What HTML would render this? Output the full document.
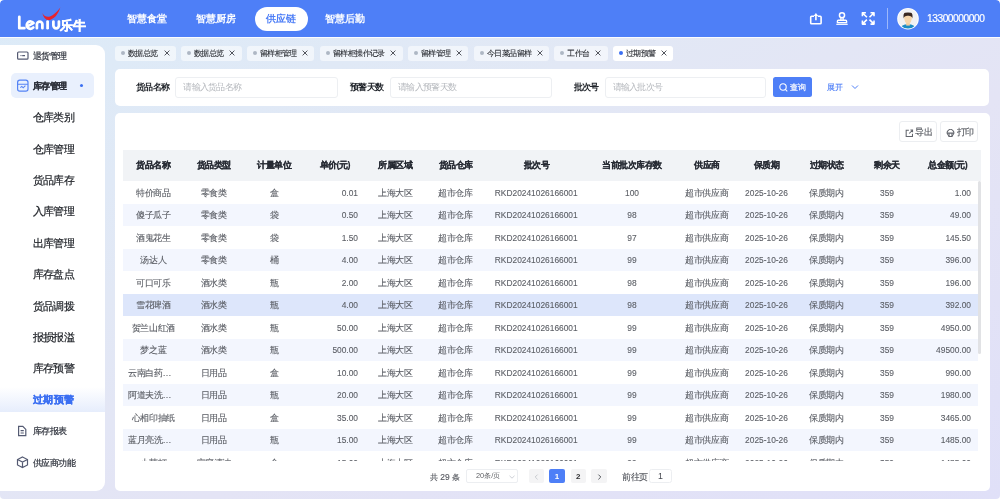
<!DOCTYPE html>
<html><head><meta charset="utf-8">
<style>
*{box-sizing:border-box;margin:0;padding:0}
html,body{width:1000px;height:499px;overflow:hidden}
body{font-family:"Liberation Sans",sans-serif;position:relative;color:#303133;background:#fff}
#root{position:absolute;left:0;top:0;width:1000px;height:499px;will-change:transform;border-radius:4px;overflow:hidden;background:linear-gradient(153deg,#dcebf8 0%,#e2e8f5 35%,#e4e4f5 60%,#e0e0f8 100%)}
.abs{position:absolute}
#hdr{left:0;top:0;width:1000px;height:37px;background:#4e7ff7;border-radius:4px 4px 0 0}
#hdrline{left:0;top:37px;width:1000px;height:1.2px;background:#fbfcff}
.nav{position:absolute;top:11px;height:16px;line-height:16px;font-size:10.1px;color:#fff;font-weight:bold;white-space:nowrap}
#pill{left:255px;top:7px;width:53px;height:24px;border-radius:12px;background:#fff}
.phone{left:927px;top:12px;font-size:10.2px;color:#fff;line-height:14px;letter-spacing:-0.45px;-webkit-text-stroke:.2px #fff}
#side{left:0;top:45px;width:104.5px;height:445.5px;background:#fff;border-radius:0 9px 9px 0}
.grp{position:absolute;left:32.5px;font-size:9px;letter-spacing:-0.4px;color:#30343e;-webkit-text-stroke:.2px #30343e;white-space:nowrap;line-height:12px}
.sub{position:absolute;left:32.5px;font-size:11px;letter-spacing:-0.6px;color:#1d2026;-webkit-text-stroke:.2px #1d2026;white-space:nowrap;line-height:14px}
.card{position:absolute;background:#fff;border-radius:5px}
.tab{position:absolute;top:45.5px;height:15.5px;border-radius:3px;background:rgba(255,255,255,.55);font-size:8px;letter-spacing:-0.6px;color:#2a2d33;-webkit-text-stroke:.1px #2a2d33;line-height:15.5px;white-space:nowrap}
.tab .dot{position:absolute;left:6px;top:5.75px;width:4px;height:4px;border-radius:50%;background:#aeb7c4}
.tab .t{position:absolute;left:13px;top:0}
.tab .x{position:absolute;right:6.5px;top:4.6px}
.lbl{position:absolute;top:80px;font-size:9px;letter-spacing:-0.6px;font-weight:bold;color:#1f2329;line-height:14px;white-space:nowrap}
.inp{position:absolute;top:77.2px;height:20.4px;border:1px solid #edeff2;border-radius:3px;background:#fff;font-size:9px;letter-spacing:-0.7px;color:#b5b8bd;line-height:18px;padding-left:7px;white-space:nowrap}
.btn{left:773.4px;top:77.2px;width:39px;height:20.2px;border-radius:2.5px;background:#4e7ff7;color:#fff;font-size:8.4px;line-height:20px;-webkit-text-stroke:.2px #fff}
.btn svg{position:absolute;left:6px;top:6px}
.btn span{position:absolute;left:17px;top:0}
.expand{left:826.5px;top:80px;font-size:8.4px;color:#4e7ff7;line-height:14px;-webkit-text-stroke:.15px #4e7ff7}
.tbtn{top:121.4px;width:38px;height:20.4px;border:1px solid #eceef1;border-radius:3px;background:#fff;font-size:9px;letter-spacing:-0.4px;color:#55585f;-webkit-text-stroke:.15px #55585f;line-height:19px}
.tbtn svg{position:absolute;left:4.8px;top:6.3px}
.tbtn span{position:absolute;left:15.6px;top:.6px}
table{border-collapse:collapse;table-layout:fixed;width:855px;font-size:8.4px;color:#5b5e65}
th{height:31px;background:#f1f3f6;font-weight:bold;color:#262a33;-webkit-text-stroke:.12px #262a33;letter-spacing:-0.5px;font-size:9px;padding-top:1px;text-align:center;white-space:nowrap;padding:0}
td{height:22.5px;text-align:center;white-space:nowrap;overflow:hidden;padding:1px 5px 0 5px;text-overflow:ellipsis;-webkit-text-stroke:.1px #5b5e65}
tr.s td{background:#f3f6fe}
tr.h td{background:#dde6fb}
td.r{text-align:right;padding-right:7px}
td.z{padding-top:2px;font-size:9px;letter-spacing:-0.4px;-webkit-text-stroke:.12px #5b5e65}
.pbtn{top:469.2px;width:15.2px;height:13.6px;border-radius:2px;background:#f4f4f5;color:#303133;font-size:8px;line-height:15px;text-align:center}

</style></head><body><div id="root">
<div id="hdr" class="abs"></div><div id="hdrline" class="abs"></div>
<svg class="abs" style="left:0;top:0" width="100" height="37" viewBox="0 0 100 37"><g fill="none" stroke="#fff" stroke-width="2.75" stroke-linecap="round" stroke-linejoin="round">
<path d="M19.3 16.8 V28.2 H24.4"/>
<path d="M26.8 26.6 L33.5 23.1 A3.7 3.7 0 1 0 33.3 27.5"/>
<path d="M36.9 28.2 V24.3 A2.75 2.75 0 0 1 42.4 24.3 V28.2"/>
<path d="M47.6 21.6 V28.2"/>
<path d="M53.4 21.6 V25.5 A2.75 2.75 0 0 0 58.9 25.5 V21.6"/>
</g>
<path d="M42.3 13 Q45.3 18 50 16.5 Q55 14.6 60.4 7.6 Q57 17.5 50.6 19.8 Q44.6 21.6 42.3 13Z" fill="#e8222c"/>
<text x="59.8" y="29.8" font-size="13.2" fill="#fff" font-weight="bold" stroke="#fff" stroke-width=".35" style="font-family:'Liberation Sans'">乐牛</text></svg>

<div id="pill" class="abs"></div>
<div class="nav" style="left:126.5px;color:#fff">智慧食堂</div>
<div class="nav" style="left:196px;color:#fff">智慧厨房</div>
<div class="nav" style="left:266px;color:#4e7ff7">供应链</div>
<div class="nav" style="left:325px;color:#fff">智慧后勤</div>
<svg class="abs" style="left:0;top:0" width="1000" height="37" viewBox="0 0 1000 37">
<g fill="none" stroke="#fff" stroke-width="1.6" stroke-linejoin="round">
<path d="M814 16.3 H811.6 Q810.7 16.3 810.7 17.2 V22.9 Q810.7 23.8 811.6 23.8 H820.2 Q821.1 23.8 821.1 22.9 V17.2 Q821.1 16.3 820.2 16.3 H817.8"/>
<path d="M815.9 20.2 V15.2"/>
<circle cx="842" cy="15.3" r="2.55" stroke-width="1.5"/>
<path d="M840.9 17.7 V19.9 M843.1 17.7 V19.9" stroke-width="1.3"/>
<path d="M837.4 22.6 V21.2 Q837.4 20.3 838.3 20.3 H845.7 Q846.6 20.3 846.6 21.2 V22.6Z" stroke-width="1.4"/>
<path d="M862.4 16.3 V12.8 H865.9 M862.6 13 L866.9 17.3 M874 16.3 V12.8 H870.5 M873.8 13 L869.5 17.3 M862.4 20.6 V24.1 H865.9 M862.6 23.9 L866.9 19.6 M874 20.6 V24.1 H870.5 M873.8 23.9 L869.5 19.6"/>
</g>
<path d="M813.6 16 L815.9 13.1 L818.2 16Z" fill="#fff"/>
<rect x="836.3" y="23.7" width="11.4" height="1.2" fill="#fff"/>
</svg>

<div class="abs" style="left:887px;top:8px;width:1px;height:21px;background:rgba(255,255,255,.45)"></div>
<svg class="abs" style="left:896px;top:7px" width="24" height="24" viewBox="0 0 24 24"><defs><clipPath id="cav"><circle cx="12" cy="11.7" r="9.9"/></clipPath></defs><circle cx="12" cy="11.7" r="10.8" fill="#fff"/><circle cx="12" cy="11.7" r="9.9" fill="#f1f1f3"/><g clip-path="url(#cav)"><path d="M3.5 23 Q4.5 17.4 12 17.2 Q19.5 17.4 20.5 23Z" fill="#1b8cc4"/><rect x="10.2" y="15" width="3.6" height="3.6" fill="#f3cc9c"/><path d="M8 8.5 Q8 16.5 12 16.5 Q16 16.5 16 8.5Z" fill="#f6d5aa"/><path d="M7.6 11.5 Q7 6.2 9 5.8 Q12 5 15 5.8 Q17 6.2 16.4 11.5 Q15.8 8.6 12 8.8 Q8.2 8.6 7.6 11.5Z" fill="#3a2720"/></g></svg>

<div class="abs phone">13300000000</div>
<div id="side" class="abs"></div>
<div class="abs" style="left:10.5px;top:73px;width:83.5px;height:25px;border-radius:5px;background:#e9f0fd"></div>
<div class="abs" style="left:0;top:387px;width:104.5px;height:25px;background:linear-gradient(180deg,rgba(232,238,253,0) 0%,#e6edfc 100%)"></div>
<svg class="abs" style="left:0;top:40px" width="40" height="440" viewBox="0 40 40 440" fill="none" stroke="#545a72" stroke-width="1.2">
<rect x="17.6" y="52" width="10.4" height="7.2" rx="1"/><circle cx="21" cy="55.6" r=".7" fill="#545a72" stroke="none"/><path d="M22.2 55.6 H25"/>
<rect x="17.6" y="80.2" width="10.4" height="11" rx="2.2" stroke="#5583f5"/><path d="M17.6 84.2 H28 M20.3 87.6 L21.8 86.4 L23.2 87.8 L25.4 85.6" stroke="#5583f5" stroke-width="1.1"/>
<path d="M18.6 426.4 H22.8 L25.8 429.4 V435.6 H18.6Z"/><path d="M20.6 430.6 H23.8 M20.6 433 H23.8"/>
<path d="M22.5 457 L27.5 459.5 V465 L22.5 467.5 L17.5 465 V459.5Z M17.5 459.5 L22.5 462 L27.5 459.5 M22.5 462 V467.5"/>
</svg>

<div class="grp" style="top:49.5px">退货管理</div>
<div class="grp" style="top:79.5px;font-weight:bold;color:#1f2329">库存管理</div>
<div class="abs" style="left:79.5px;top:83.5px;width:3.5px;height:3.5px;border-radius:50%;background:#3b6ff2"></div>
<div class="sub" style="top:110.40px;">仓库类别</div>
<div class="sub" style="top:141.75px;">仓库管理</div>
<div class="sub" style="top:173.10px;">货品库存</div>
<div class="sub" style="top:204.45px;">入库管理</div>
<div class="sub" style="top:235.80px;">出库管理</div>
<div class="sub" style="top:267.15px;">库存盘点</div>
<div class="sub" style="top:298.50px;">货品调拨</div>
<div class="sub" style="top:329.85px;">报损报溢</div>
<div class="sub" style="top:361.20px;">库存预警</div>
<div class="sub" style="top:392.55px;color:#3b6ff2;-webkit-text-stroke:.3px #3b6ff2;font-weight:bold;font-size:10.3px;letter-spacing:.3px;left:33px;top:393.15px">过期预警</div>
<div class="grp" style="top:424.5px">库存报表</div>
<div class="grp" style="top:456.5px">供应商功能</div>
<div class="tab" style="left:115px;width:61.2px;"><span class="dot" style=""></span><span class="t">数据总览</span><svg class="x" width="6" height="6" viewBox="0 0 6 6"><path d="M.6 .6 L5.4 5.4 M5.4 .6 L.6 5.4" stroke="#4a4d55" stroke-width=".95"/></svg></div>
<div class="tab" style="left:180.8px;width:61.0px;"><span class="dot" style=""></span><span class="t">数据总览</span><svg class="x" width="6" height="6" viewBox="0 0 6 6"><path d="M.6 .6 L5.4 5.4 M5.4 .6 L.6 5.4" stroke="#4a4d55" stroke-width=".95"/></svg></div>
<div class="tab" style="left:246.8px;width:67.7px;"><span class="dot" style=""></span><span class="t">留样柜管理</span><svg class="x" width="6" height="6" viewBox="0 0 6 6"><path d="M.6 .6 L5.4 5.4 M5.4 .6 L.6 5.4" stroke="#4a4d55" stroke-width=".95"/></svg></div>
<div class="tab" style="left:320px;width:82.5px;"><span class="dot" style=""></span><span class="t">留样柜操作记录</span><svg class="x" width="6" height="6" viewBox="0 0 6 6"><path d="M.6 .6 L5.4 5.4 M5.4 .6 L.6 5.4" stroke="#4a4d55" stroke-width=".95"/></svg></div>
<div class="tab" style="left:408px;width:60.0px;"><span class="dot" style=""></span><span class="t">留样管理</span><svg class="x" width="6" height="6" viewBox="0 0 6 6"><path d="M.6 .6 L5.4 5.4 M5.4 .6 L.6 5.4" stroke="#4a4d55" stroke-width=".95"/></svg></div>
<div class="tab" style="left:474px;width:75.0px;"><span class="dot" style=""></span><span class="t">今日菜品留样</span><svg class="x" width="6" height="6" viewBox="0 0 6 6"><path d="M.6 .6 L5.4 5.4 M5.4 .6 L.6 5.4" stroke="#4a4d55" stroke-width=".95"/></svg></div>
<div class="tab" style="left:554.4px;width:53.2px;"><span class="dot" style=""></span><span class="t">工作台</span><svg class="x" width="6" height="6" viewBox="0 0 6 6"><path d="M.6 .6 L5.4 5.4 M5.4 .6 L.6 5.4" stroke="#4a4d55" stroke-width=".95"/></svg></div>
<div class="tab" style="left:613px;width:60.4px;background:#fff;"><span class="dot" style="background:#3b6ff2"></span><span class="t">过期预警</span><svg class="x" width="6" height="6" viewBox="0 0 6 6"><path d="M.6 .6 L5.4 5.4 M5.4 .6 L.6 5.4" stroke="#4a4d55" stroke-width=".95"/></svg></div>
<div class="card" style="left:115px;top:69px;width:874px;height:36.5px"></div>
<div class="lbl" style="left:135.8px">货品名称</div>
<div class="inp" style="left:175.3px;width:162.5px">请输入货品名称</div>
<div class="lbl" style="left:350px">预警天数</div>
<div class="inp" style="left:390px;width:161.5px">请输入预警天数</div>
<div class="lbl" style="left:573.5px">批次号</div>
<div class="inp" style="left:604.5px;width:161.5px">请输入批次号</div>
<div class="abs btn"><svg width="9" height="9" viewBox="0 0 9 9" fill="none" stroke="#fff" stroke-width="1.1"><circle cx="4" cy="4" r="3.2"/><path d="M6.3 6.3 L8.3 8.3"/></svg>
<span>查询</span></div>
<div class="abs expand">展开</div>
<svg class="abs" style="left:851px;top:84px" width="8" height="6" viewBox="0 0 8 6"><path d="M1 1.5 L4 4.5 L7 1.5" fill="none" stroke="#4e7ff7" stroke-width="1"/></svg>
<div class="card" style="left:115px;top:113px;width:874.5px;height:377.5px"></div>
<div class="abs tbtn" style="left:898.8px"><svg width="9" height="9" viewBox="0 0 10 10" fill="none" stroke="#62656c" stroke-width="1.15"><path d="M4.3 1.3 H1.3 V8.3 H8.3 V5.3"/><path d="M4.6 5 L8.2 1.4 M6 1.2 H8.4 V3.6"/></svg>
<span>导出</span></div>
<div class="abs tbtn" style="left:940.2px"><svg width="9" height="9" viewBox="0 0 10 10" fill="none" stroke="#62656c" stroke-width="1.15"><path d="M2.2 6.4 A3.6 3.6 0 1 1 7.8 6.4"/><path d="M1.3 4.6 H8.7"/><path d="M3.4 4.6 V8.4 H6.6 V4.6"/><path d="M2.2 6.4 Q3 7.8 3.4 8" /><path d="M7.8 6.4 Q7 7.8 6.6 8"/></svg>
<span>打印</span></div>
<div class="abs" style="left:123px;top:150px;width:858px;height:311px;overflow:hidden;background:#fff">
<div class="abs" style="left:0;top:0;width:858px;height:31px;background:#f1f3f6"></div>
<table class="abs" style="left:0;top:0"><colgroup><col style="width:60.5px"><col style="width:60.5px"><col style="width:60.5px"><col style="width:60.5px"><col style="width:60.5px"><col style="width:60px"><col style="width:101.5px"><col style="width:90px"><col style="width:59.5px"><col style="width:60px"><col style="width:60px"><col style="width:61px"><col style="width:60.5px"></colgroup>
<tr><th>货品名称</th><th>货品类型</th><th>计量单位</th><th>单价(元)</th><th>所属区域</th><th>货品仓库</th><th>批次号</th><th>当前批次库存数</th><th>供应商</th><th>保质期</th><th>过期状态</th><th>剩余天</th><th>总金额(元)</th></tr>
<tr class=""><td class="z">特价商品</td><td class="z">零食类</td><td class="z">盒</td><td class="r">0.01</td><td class="z">上海大区</td><td class="z">超市仓库</td><td>RKD20241026166001</td><td>100</td><td class="z">超市供应商</td><td>2025-10-26</td><td class="z">保质期内</td><td>359</td><td class="r">1.00</td></tr>
<tr class="s"><td class="z">傻子瓜子</td><td class="z">零食类</td><td class="z">袋</td><td class="r">0.50</td><td class="z">上海大区</td><td class="z">超市仓库</td><td>RKD20241026166001</td><td>98</td><td class="z">超市供应商</td><td>2025-10-26</td><td class="z">保质期内</td><td>359</td><td class="r">49.00</td></tr>
<tr class=""><td class="z">酒鬼花生</td><td class="z">零食类</td><td class="z">袋</td><td class="r">1.50</td><td class="z">上海大区</td><td class="z">超市仓库</td><td>RKD20241026166001</td><td>97</td><td class="z">超市供应商</td><td>2025-10-26</td><td class="z">保质期内</td><td>359</td><td class="r">145.50</td></tr>
<tr class="s"><td class="z">汤达人</td><td class="z">零食类</td><td class="z">桶</td><td class="r">4.00</td><td class="z">上海大区</td><td class="z">超市仓库</td><td>RKD20241026166001</td><td>99</td><td class="z">超市供应商</td><td>2025-10-26</td><td class="z">保质期内</td><td>359</td><td class="r">396.00</td></tr>
<tr class=""><td class="z">可口可乐</td><td class="z">酒水类</td><td class="z">瓶</td><td class="r">2.00</td><td class="z">上海大区</td><td class="z">超市仓库</td><td>RKD20241026166001</td><td>98</td><td class="z">超市供应商</td><td>2025-10-26</td><td class="z">保质期内</td><td>359</td><td class="r">196.00</td></tr>
<tr class="h"><td class="z">雪花啤酒</td><td class="z">酒水类</td><td class="z">瓶</td><td class="r">4.00</td><td class="z">上海大区</td><td class="z">超市仓库</td><td>RKD20241026166001</td><td>98</td><td class="z">超市供应商</td><td>2025-10-26</td><td class="z">保质期内</td><td>359</td><td class="r">392.00</td></tr>
<tr class=""><td class="z">贺兰山红酒</td><td class="z">酒水类</td><td class="z">瓶</td><td class="r">50.00</td><td class="z">上海大区</td><td class="z">超市仓库</td><td>RKD20241026166001</td><td>99</td><td class="z">超市供应商</td><td>2025-10-26</td><td class="z">保质期内</td><td>359</td><td class="r">4950.00</td></tr>
<tr class="s"><td class="z">梦之蓝</td><td class="z">酒水类</td><td class="z">瓶</td><td class="r">500.00</td><td class="z">上海大区</td><td class="z">超市仓库</td><td>RKD20241026166001</td><td>99</td><td class="z">超市供应商</td><td>2025-10-26</td><td class="z">保质期内</td><td>359</td><td class="r">49500.00</td></tr>
<tr class=""><td class="z">云南白药牙膏</td><td class="z">日用品</td><td class="z">盒</td><td class="r">10.00</td><td class="z">上海大区</td><td class="z">超市仓库</td><td>RKD20241026166001</td><td>99</td><td class="z">超市供应商</td><td>2025-10-26</td><td class="z">保质期内</td><td>359</td><td class="r">990.00</td></tr>
<tr class="s"><td class="z">阿道夫洗发水</td><td class="z">日用品</td><td class="z">瓶</td><td class="r">20.00</td><td class="z">上海大区</td><td class="z">超市仓库</td><td>RKD20241026166001</td><td>99</td><td class="z">超市供应商</td><td>2025-10-26</td><td class="z">保质期内</td><td>359</td><td class="r">1980.00</td></tr>
<tr class=""><td class="z">心相印抽纸</td><td class="z">日用品</td><td class="z">盒</td><td class="r">35.00</td><td class="z">上海大区</td><td class="z">超市仓库</td><td>RKD20241026166001</td><td>99</td><td class="z">超市供应商</td><td>2025-10-26</td><td class="z">保质期内</td><td>359</td><td class="r">3465.00</td></tr>
<tr class="s"><td class="z">蓝月亮洗衣液</td><td class="z">日用品</td><td class="z">瓶</td><td class="r">15.00</td><td class="z">上海大区</td><td class="z">超市仓库</td><td>RKD20241026166001</td><td>99</td><td class="z">超市供应商</td><td>2025-10-26</td><td class="z">保质期内</td><td>359</td><td class="r">1485.00</td></tr>
<tr class=""><td class="z">小苏打</td><td class="z">家庭清洁</td><td class="z">盒</td><td class="r">15.00</td><td class="z">上海大区</td><td class="z">超市仓库</td><td>RKD20241026166001</td><td>99</td><td class="z">超市供应商</td><td>2025-10-26</td><td class="z">保质期内</td><td>359</td><td class="r">1485.00</td></tr>
</table>
<div class="abs" style="left:854.8px;top:31px;width:3.6px;height:173px;border-radius:1.8px;background:#e1e2e5"></div>
</div>
<div class="abs pg" style="left:430px;top:469.5px;line-height:14px;font-size:8.4px;color:#585b62;-webkit-text-stroke:.15px #585b62">共 29 条</div>
<div class="abs" style="left:466px;top:469.3px;width:52px;height:13.8px;border:1px solid #eceef1;border-radius:2px;font-size:7.4px;color:#606266;line-height:12px;padding-left:9px">20条/页</div>
<svg class="abs" style="left:509px;top:474.5px" width="6" height="4" viewBox="0 0 6 4"><path d="M.5 .8 L3 3.2 L5.5 .8" fill="none" stroke="#c0c4cc" stroke-width=".8"/></svg>
<div class="abs pbtn" style="left:528.6px"><svg class="abs" style="left:5.4px;top:4.5px" width="5" height="6" viewBox="0 0 5 6"><path d="M3.6 .6 L1.2 3 L3.6 5.4" fill="none" stroke="#c3c6cc" stroke-width=".9"/></svg></div>
<div class="abs pbtn" style="left:549.4px;background:#4e7ff7;color:#fff;font-weight:bold">1</div>
<div class="abs pbtn" style="left:570.6px;font-weight:bold">2</div>
<div class="abs pbtn" style="left:591.4px"><svg class="abs" style="left:5.4px;top:4.5px" width="5" height="6" viewBox="0 0 5 6"><path d="M1.4 .6 L3.8 3 L1.4 5.4" fill="none" stroke="#45484f" stroke-width=".9"/></svg></div>
<div class="abs" style="left:622.4px;top:469.5px;line-height:14px;font-size:9px;letter-spacing:-0.45px;color:#585b62;-webkit-text-stroke:.15px #585b62">前往页</div>
<div class="abs" style="left:648.8px;top:469px;width:23.4px;height:14px;border:1px solid #eceef1;border-radius:2.5px;font-size:8.8px;color:#45484f;line-height:13px;text-align:center">1</div>
</div></body></html>
